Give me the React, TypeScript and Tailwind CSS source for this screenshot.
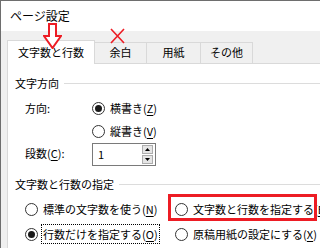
import React from 'react';

const FONT = '"Noto Sans CJK JP", "Noto Sans", sans-serif';

function Radio({ checked }: { checked?: boolean }) {
  return (
    <span className="flex h-[13px] w-[13px] shrink-0 items-center justify-center rounded-full border border-[#333333] bg-white">
      {checked && <span className="h-[7px] w-[7px] rounded-full bg-[#1a1a1a]" />}
    </span>
  );
}

function Label({ text, k }: { text: string; k: string }) {
  return (
    <span className="whitespace-nowrap">
      {text}(<span className="underline underline-offset-2">{k}</span>)
    </span>
  );
}

function GroupHeader({ title }: { title: string }) {
  return (
    <div className="flex h-[20px] items-center gap-[5px] pl-[7px]">
      <span className="whitespace-nowrap">{title}</span>
      <span className="h-px flex-1 bg-[#dcdcdc]" />
    </div>
  );
}

function RadioRow({ checked, text, k, focused }: { checked?: boolean; text: string; k: string; focused?: boolean }) {
  return (
    <div className="flex h-[22px] items-center gap-[3px] whitespace-nowrap">
      <Radio checked={checked} />
      <span className={focused ? 'border border-dotted border-black px-[1px] leading-[18px]' : 'px-[2px]'}>
        <Label text={text} k={k} />
      </span>
    </div>
  );
}

function SpinBox({ value }: { value: string }) {
  return (
    <div className="flex h-[23px] w-[64px] items-center border border-[#7a7a7a] bg-white">
      <span className="flex-1 pl-[5px]">{value}</span>
      <div className="mr-[2px] flex h-[19px] w-[11px] flex-col gap-px">
        <div className="flex flex-1 items-center justify-center border border-[#adadad] bg-[#e5e5e5]">
          <svg width="5" height="3" viewBox="0 0 5 3"><path d="M2.5 0 L5 3 L0 3 Z" fill="#000" /></svg>
        </div>
        <div className="flex flex-1 items-center justify-center border border-[#adadad] bg-[#e5e5e5]">
          <svg width="5" height="3" viewBox="0 0 5 3"><path d="M0 0 L5 0 L2.5 3 Z" fill="#000" /></svg>
        </div>
      </div>
    </div>
  );
}

export default function App() {
  const tabs = [
    { name: '余白', w: 'w-[52px]' },
    { name: '用紙', w: 'w-[54px]' },
    { name: 'その他', w: 'w-[52px]' },
  ];

  return (
    <div
      className="relative flex h-[248px] w-[320px] flex-col overflow-hidden border-l border-t border-[#6e6e6e] bg-white text-[11px] text-black"
      style={{ fontFamily: FONT }}
    >
      <div className="flex h-[30px] shrink-0 items-center pl-[9px] text-[12px]">ページ設定</div>

      <div className="flex flex-1 flex-col bg-[#f0f0f0] pl-[6px] pt-[8px]">
        <div className="relative z-10 flex h-[24px] items-end">
          <div className="-mb-px flex h-[24px] w-[88px] items-center justify-center border-l border-r border-t border-[#d9d9d9] bg-white">
            文字数と行数
          </div>
          {tabs.map((t) => (
            <div
              key={t.name}
              className={`flex h-[21px] ${t.w} items-center justify-center border-r border-t border-[#d9d9d9] bg-[#f0f0f0] pb-px`}
            >
              {t.name}
            </div>
          ))}
        </div>

        <div className="min-w-0 flex-1 border-l border-t border-[#d9d9d9] bg-white pt-[9px]">
          <GroupHeader title="文字方向" />

          <div className="mt-[4px] grid grid-cols-[67px_1fr] pl-[17px]">
            <div className="flex h-[22px] items-center">方向:</div>
            <RadioRow checked text="横書き" k="Z" />
            <div />
            <div className="mt-px">
              <RadioRow text="縦書き" k="V" />
            </div>
            <div className="flex h-[23px] items-center">
              <Label text="段数" k="C" />:
            </div>
            <div className="mt-px">
              <SpinBox value="1" />
            </div>
          </div>

          <div className="mt-[8px]">
            <GroupHeader title="文字数と行数の指定" />
          </div>

          <div className="mt-[4px] grid grid-cols-[150px_150px] gap-y-[3px] pl-[17px]">
            <RadioRow text="標準の文字数を使う" k="N" />
            <RadioRow text="文字数と行数を指定する" k="E" />
            <RadioRow checked focused text="行数だけを指定する" k="O" />
            <RadioRow text="原稿用紙の設定にする" k="X" />
          </div>
        </div>
      </div>

      {/* annotations */}
      <svg className="absolute left-[42px] top-[22px] z-20" width="19" height="26" viewBox="0 0 19 26">
        <path d="M6 1 H13 V13 H18 L9.5 25 L1 13 H6 Z" fill="#ffffff" stroke="#ed1c24" strokeWidth="2" strokeLinejoin="miter" />
      </svg>
      <svg className="absolute left-[109px] top-[27px] z-20" width="15" height="16" viewBox="0 0 15 16">
        <path d="M1 1 L14 15 M14 1 L1 15" stroke="#ed1c24" strokeWidth="1.6" />
      </svg>
      <div className="absolute left-[167px] top-[193px] z-20 h-[27px] w-[149px] border-[3px] border-[#ed1c24]" />
    </div>
  );
}
